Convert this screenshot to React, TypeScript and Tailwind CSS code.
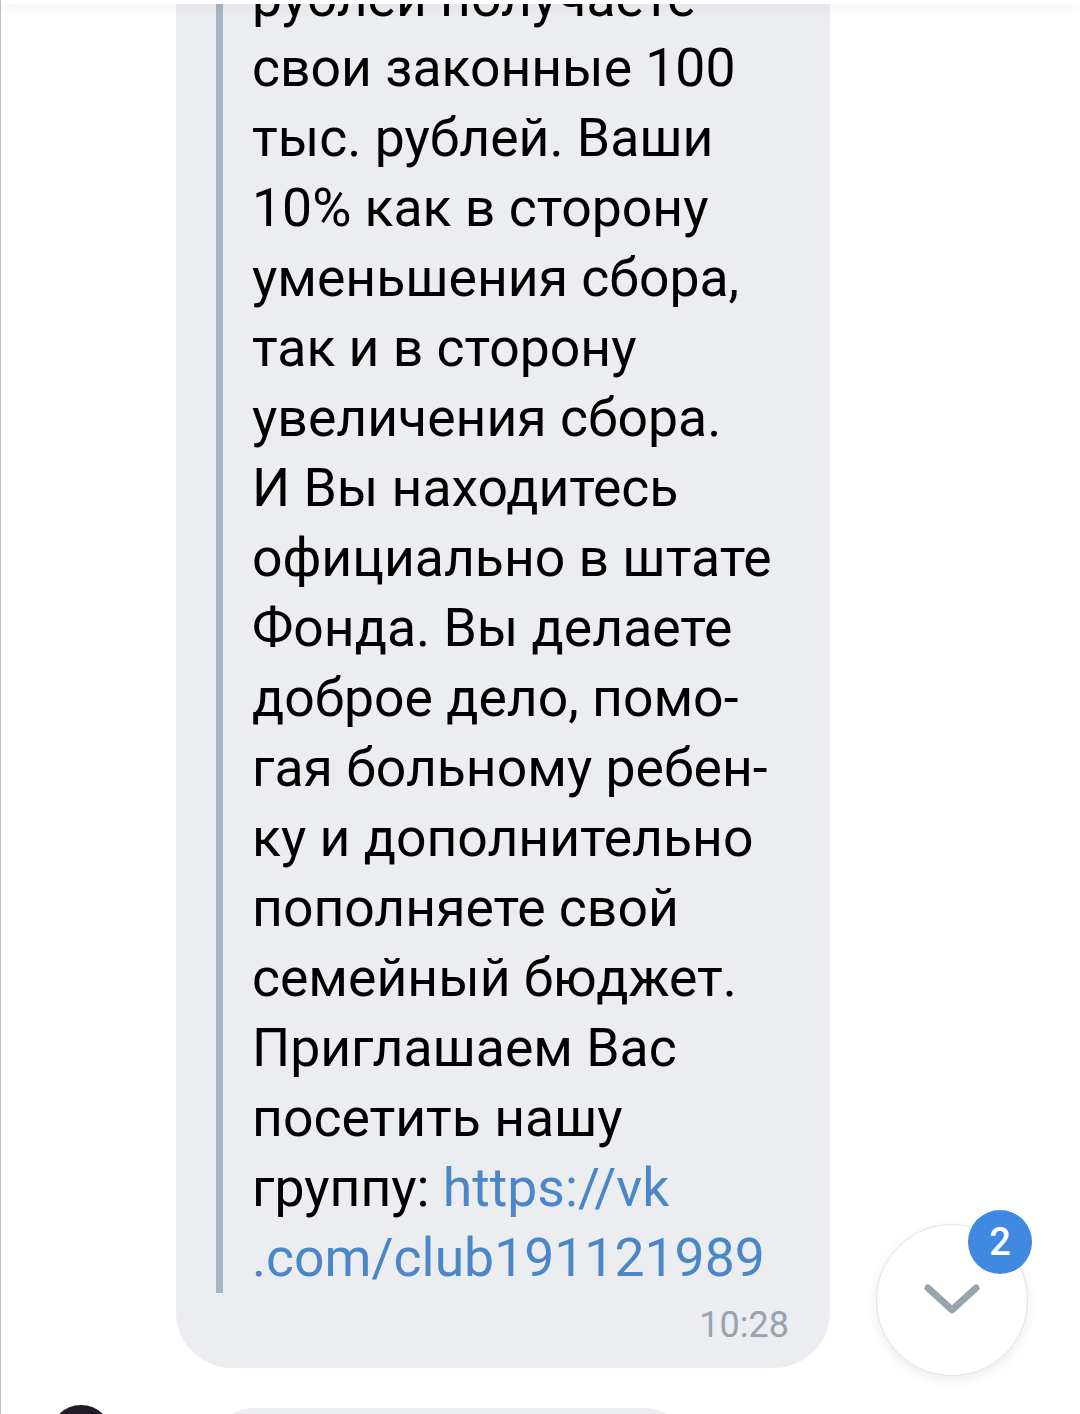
const lines: { text: string; link?: string }[] = [
  { text: "рублей получаете" },
  { text: "свои законные 100" },
  { text: "тыс. рублей. Ваши" },
  { text: "10% как в сторону" },
  { text: "уменьшения сбора," },
  { text: "так и в сторону" },
  { text: "увеличения сбора." },
  { text: "И Вы находитесь" },
  { text: "официально в штате" },
  { text: "Фонда. Вы делаете" },
  { text: "доброе дело, помо-" },
  { text: "гая больному ребен-" },
  { text: "ку и дополнительно" },
  { text: "пополняете свой" },
  { text: "семейный бюджет." },
  { text: "Приглашаем Вас" },
  { text: "посетить нашу" },
  { text: "группу: ", link: "https://vk" },
  { text: "", link: ".com/club191121989" },
];

export default function App() {
  return (
    <div className="relative h-[1414px] w-[1080px] overflow-hidden border-l border-[#bdbdbd] bg-white font-['Roboto',sans-serif]">
      {/* top bar edge */}
      <div className="absolute inset-x-0 top-0 z-10 h-[4px] bg-white shadow-[0_3px_14px_rgba(0,0,0,0.10)]" />

      {/* message bubble */}
      <div className="-mt-[37px] ml-[175px] w-[654px] rounded-b-[56px] bg-[#ebedf0] pb-[22px] pl-[40px] pr-[41px]">
        <div className="flex gap-[29px]">
          <div className="w-[7px] shrink-0 bg-[#a9b5c4]" />
          <div className="whitespace-pre text-[53.5px] leading-[70px] text-black">
            {lines.map((line, i) => (
              <div key={i}>
                {line.text}
                {line.link && <span className="text-[#4b87c7]">{line.link}</span>}
              </div>
            ))}
          </div>
        </div>
        <div className="mt-[12px] text-right text-[36px] leading-[41px] text-[#99a2ad]">10:28</div>
      </div>

      {/* next message */}
      <div className="mt-[37px] flex items-start">
        <div className="ml-[49px] h-[62px] w-[62px] shrink-0 rounded-full bg-[#221a24]" />
        <div className="ml-[101px] mt-[3px] h-[100px] w-[472px] rounded-[40px] bg-[#ebedf0]" />
      </div>

      {/* scroll down button */}
      <div className="absolute left-[875px] top-[1224px] flex h-[152px] w-[152px] items-center justify-center rounded-full border border-[#e3e4e8] bg-white shadow-[0_4px_12px_rgba(0,0,0,0.08)]">
        <svg width="58" height="32" viewBox="0 0 58 32" fill="none" className="mb-[2px]">
          <path d="M5 5 L29 27 L53 5" stroke="#99a2ad" strokeWidth="7" strokeLinecap="round" strokeLinejoin="round" />
        </svg>
      </div>
      <div className="absolute left-[967px] top-[1210px] flex h-[64px] w-[64px] items-center justify-center rounded-full bg-[#3f8ae0] text-[38px] font-medium text-white">
        2
      </div>
    </div>
  );
}
